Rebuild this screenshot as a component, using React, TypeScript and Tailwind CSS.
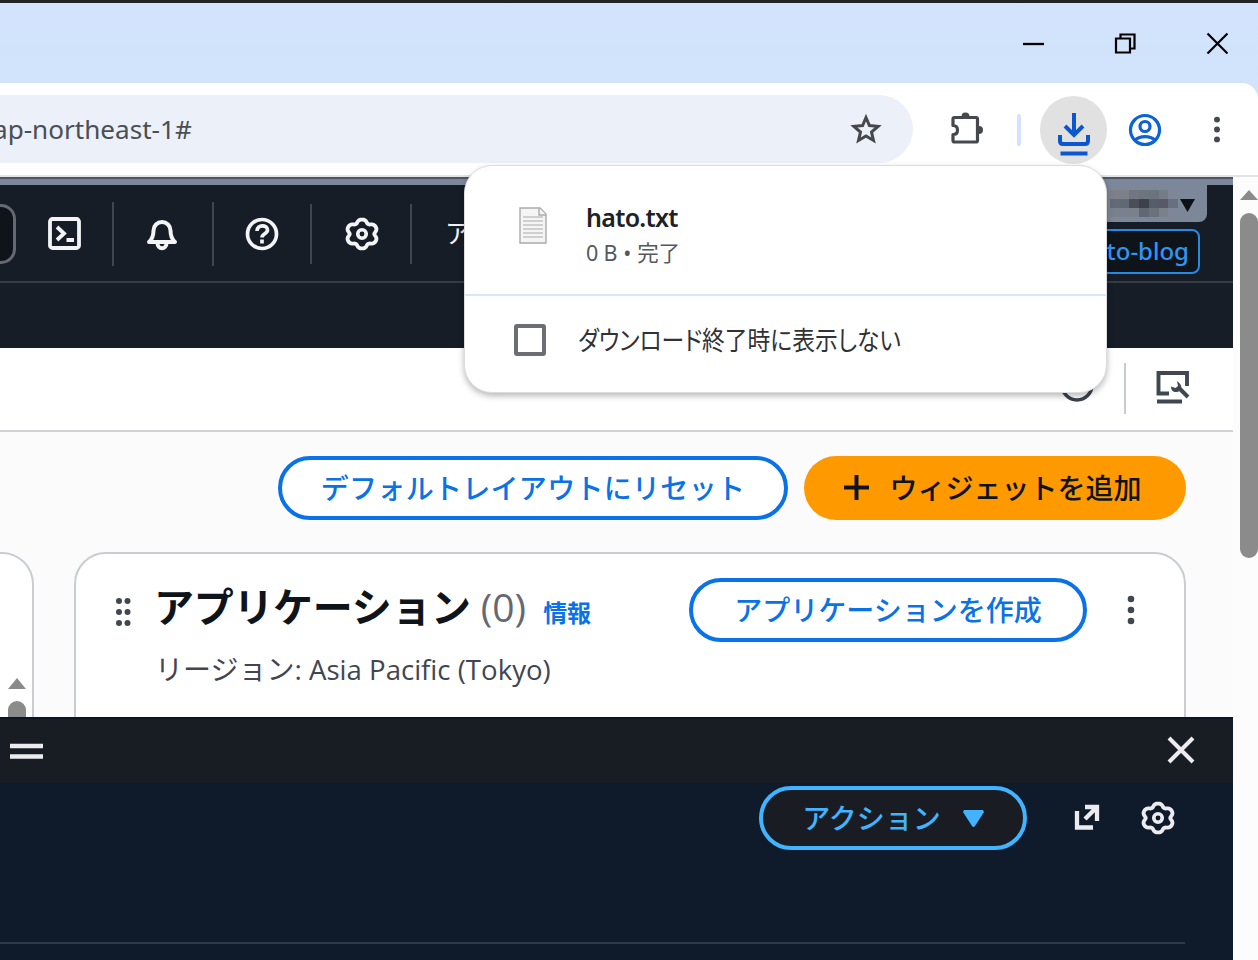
import React from "react";

const jp = "font-['Open_Sans','Noto_Sans_CJK_JP',sans-serif]";

// Six-lobed cog outline in a 32-unit box, slightly widened so it fills the square
const gearPath =
  Array.from({ length: 72 }, (_, i) => {
    const a = (i * Math.PI) / 36;
    const r = 12.4 + 1.5 * Math.cos(6 * a) - 0.3 * Math.cos(12 * a);
    return `${i ? "L" : "M"}${(16 + 1.09 * r * Math.sin(a)).toFixed(2)} ${(16 - r * Math.cos(a)).toFixed(2)}`;
  }).join("") + "Z";

function Gear({ className }: { className: string }) {
  return (
    <svg viewBox="0 0 32 32" className={className} fill="none" stroke="currentColor" strokeWidth="3.6" strokeLinejoin="round">
      <path d={gearPath} />
      <circle cx="16" cy="16" r="4" strokeWidth="3.4" />
    </svg>
  );
}

function Dots({ className }: { className: string }) {
  return (
    <svg viewBox="0 0 8 30" className={className} fill="currentColor">
      <circle cx="4" cy="4" r="3.3" />
      <circle cx="4" cy="15" r="3.3" />
      <circle cx="4" cy="26" r="3.3" />
    </svg>
  );
}

function TitleBar() {
  return (
    <div className="flex h-[83px] shrink-0 items-center justify-end border-t-[3px] border-[#202327] bg-linear-to-b from-[#d3e2fd] to-[#d0e4fa] pr-[30px] text-black">
      <svg className="mr-[70px] h-[22px] w-[21px]" viewBox="0 0 21 22" stroke="currentColor" strokeWidth="2.3"><path d="M0 12h21" /></svg>
      <svg className="mr-[70px] h-[22px] w-[22px]" viewBox="0 0 22 22" fill="none" stroke="currentColor" strokeWidth="2.2">
        <path d="M2 6.500h14v14H2zM6.500 6.500V2.500h14v14h-4" />
      </svg>
      <svg className="h-[22px] w-[22px]" viewBox="0 0 22 22" stroke="currentColor" strokeWidth="2.2"><path d="M1.500 1.500l20 20M21.500 1.500l-20 20" /></svg>
    </div>
  );
}

function Toolbar() {
  return (
    <div className="h-[94px] shrink-0 bg-[#d2e3fc]">
      <div className="flex h-full items-start rounded-tr-[16px] border-b-2 border-[#e3e3e3] bg-white pt-3">
        <div className="flex h-[68px] w-[913px] items-center justify-between rounded-r-[34px] bg-[#ebf0f9] pr-[31px]">
          <span className="mt-[1px] ml-[-7px] w-[220px] whitespace-nowrap font-['Noto_Sans'] text-[26.1px] text-[#4b4e53]">ap-northeast-1#</span>
          <svg className="h-8 w-8" viewBox="0 0 32 32" fill="none" stroke="#45484c" strokeWidth="3">
            <path d="M16 4.500l3.400 8 8.700.8-6.600 5.700 2 8.500L16 23l-7.500 4.500 2-8.500-6.600-5.700 8.700-.8z" />
          </svg>
        </div>
        <svg className="mt-[17px] ml-[36px] h-[36px] w-[36px]" viewBox="0 0 36 36" fill="none" stroke="#45484c" strokeWidth="3.200" strokeLinejoin="round">
          <path d="M5.500 5.500H27q1.500 0 1.500 1.500v21.500q0 1.500-1.500 1.500H5.500q-1.500 0-1.500-1.500V22.500c3 0 4.500-2 4.500-4.600S7 13.500 4 13.500V7q0-1.500 1.500-1.500z" />
          <path d="M12.500 4.500a4 4 0 0 1 8 0zM30 14a4 4 0 0 1 0 8z" fill="#45484c" stroke="none" />
        </svg>
        <div className="mt-[19px] ml-[32px] h-8 w-1 rounded bg-[#d3e3fd]" />
        <div className="mt-[1px] ml-[19px] flex h-[68px] w-[67px] items-center justify-center rounded-full bg-[#e1e1e1]">
          <svg className="mt-[8px] h-[43px] w-[34px]" viewBox="0 0 34 43" fill="none" stroke="#0b57d0" strokeWidth="4">
            <path d="M17 0v21M8 13l9 9 9-9M3 22v6q0 3 3 3h22q3 0 3-3v-6M3.500 40.500h27" />
          </svg>
        </div>
        <svg className="mt-[17px] ml-[20px] h-[36px] w-[36px]" viewBox="0 0 36 36" fill="none" stroke="#0b63d6" strokeWidth="3.200">
          <circle cx="18" cy="18" r="14.500" /><circle cx="18" cy="14.500" r="5" /><path d="M8 28c5-4.500 15-4.500 20 0" />
        </svg>
        <Dots className="mt-[21px] ml-[50px] h-[27px] w-[8px] text-[#45484c]" />
      </div>
    </div>
  );
}

function ConsoleNav() {
  return (
    <div className="h-[171px] shrink-0 border-t-2 border-[#4b5565] bg-[#161d27]">
      <div className="h-[6px] bg-[#7c8899]" />
      <div className="relative flex h-[98px] border-b-2 border-[#363c46] text-[#f3f4f5]">
        <div className="mt-[19px] h-[60px] w-[16px] rounded-r-[15px] border-[3px] border-l-0 border-[#656a72] bg-[#0f141a]" />
        <div className="flex h-[97px] w-[96px] items-center justify-center">
          <svg className="h-[33px] w-[33px]" viewBox="0 0 33 33" fill="none" stroke="currentColor" strokeWidth="3.800">
            <rect x="2" y="2" width="29" height="29" rx="2.500" /><path d="M9 10l7 6.500L9 23M18.500 23H26" />
          </svg>
        </div>
        <div className="mt-[17px] h-[64px] w-[2px] bg-[#40454e]" />
        <div className="flex h-[97px] w-[98px] items-center justify-center pr-[3px]">
          <svg className="h-[34px] w-[34px]" viewBox="0 0 34 34" fill="none" stroke="currentColor" strokeWidth="4" strokeLinejoin="round">
            <path d="M4 25c4-3.500 4.500-6.500 4.500-11.500a8.500 8.500 0 0 1 17 0c0 5 .5 8 4.500 11.500z" /><path d="M12.500 26c0 7 9 7 9 0" />
          </svg>
        </div>
        <div className="mt-[17px] h-[64px] w-[2px] bg-[#40454e]" />
        <div className="flex h-[97px] w-[96px] items-center justify-center">
          <svg className="h-[34px] w-[34px]" viewBox="0 0 34 34" fill="none" stroke="currentColor" strokeWidth="3.700">
            <circle cx="17" cy="17" r="14.500" /><path d="M12 14c0-7 10.500-6.500 10.500-1 0 4-5.500 3.500-5.500 7.500M17 22.500v4" />
          </svg>
        </div>
        <div className="mt-[19px] h-[60px] w-[2px] bg-[#40454e]" />
        <div className="flex h-[97px] w-[98px] items-center justify-center pl-[1px]"><Gear className="h-[34px] w-[34px]" /></div>
        <div className="mt-[19px] h-[60px] w-[2px] bg-[#40454e]" />
        <span className={`${jp} mt-[31px] ml-[33px] h-[34px] text-[26px] leading-[34px]`}>ア</span>
        <div className="absolute top-[-1px] right-[26px] flex h-[38px] w-[160px] items-center justify-end rounded-br-[8px] bg-[#7c8899] pr-[12px]">
          <div className="mr-[2px] grid h-[27px] w-[68px] grid-cols-7 grid-rows-3">
            {["bg-[#7d8088]","bg-[#7d8087]","bg-[#707782]","bg-[#6d747e]","bg-[#6c737d]","bg-[#747c88]","bg-[#7d8798]","bg-[#626b77]","bg-[#5f6875]","bg-[#4b4e58]","bg-[#3d414b]","bg-[#555d6a]","bg-[#575967]","bg-[#667080]","bg-[#78818c]","bg-[#7a818c]","bg-[#7b818b]","bg-[#626873]","bg-[#6c727c]","bg-[#7a818c]","bg-[#7d8798]"].map((c, i) => <i key={i} className={c} />)}
          </div>
          <svg className="mt-[4px] h-[13px] w-[15px]" viewBox="0 0 15 13" fill="#0d1117"><path d="M0 0h15L7.500 13z" /></svg>
        </div>
        <div className="absolute top-[44px] right-[33px] flex h-[45px] w-[180px] items-center justify-end rounded-[8px] border-[2.500px] border-[#268be5] bg-[#0f141a] pr-[9px] pb-[2px] font-['Noto_Sans'] text-[24px] font-medium text-[#3096f5]">hato-blog</div>
      </div>
    </div>
  );
}

function ConsoleBody() {
  return (
    <>
      <div className="flex h-[84px] shrink-0 items-start justify-end border-b-2 border-[#cfd2d6] bg-white pr-[42px]">
        <svg className="mt-[20px] mr-[30px] h-[34px] w-[34px]" viewBox="0 0 34 34" fill="none" stroke="#3b424c" strokeWidth="3.500"><circle cx="17" cy="17" r="15" /></svg>
        <div className="mt-[15px] mr-[29px] h-[51px] w-[2px] bg-[#c8ccd1]" />
        <svg className="mt-[22px] h-[34px] w-[36px]" viewBox="0 0 36 34" fill="none" stroke="#414750" strokeWidth="3.900">
          <path d="M14 23.500H3.500V3H32v13M2 31.500h25" />
          <path d="M33 27l-9-9" strokeWidth="4" />
          <path d="M22 11l1 5-2.500 2-4.500-1.500c0 5 4 6.500 7.500 5 4-1 4-7-1.500-10.500z" fill="#414750" stroke="none" />
        </svg>
      </div>
      <div className={`${jp} flex shrink-0 justify-end gap-4 bg-[#fbfbfc] pt-[24px] pr-[47px] pb-8 text-[28px] font-medium`}>
        <button className="h-16 w-[510px] rounded-full border-4 border-[#0972e6] bg-white leading-[54px] tracking-[0.3px] text-[#0972e6]">デフォルトレイアウトにリセット</button>
        <button className="flex h-16 w-[382px] items-start justify-center gap-[20px] rounded-full bg-[#ff9900] pr-[4px] text-[#0f141a]">
          <svg className="mt-[19px] h-[25px] w-[25px]" viewBox="0 0 25 25" stroke="currentColor" strokeWidth="4"><path d="M12.500 0v25M0 12.500h25" /></svg>
          <span className="leading-[64px]">ウィジェットを追加</span>
        </button>
      </div>
      <div className="flex h-[165px] shrink-0 gap-[40px] overflow-hidden bg-[#fbfbfc]">
        <div className="flex h-[220px] w-[34px] flex-col items-end rounded-tr-[32px] border-2 border-l-0 border-[#c9ccd1] bg-white pr-[6px]">
          <svg className="mt-[124px] h-[11px] w-[18px]" viewBox="0 0 18 11" fill="#8b8b8b"><path d="M0 11h18L9 0z" /></svg>
          <div className="mt-[12px] h-[60px] w-[18px] rounded-full bg-[#8b8b8b]" />
        </div>
        <div className={`${jp} h-[220px] w-[1112px] rounded-[32px] border-2 border-[#c9ccd1] bg-white px-[38px]`}>
          <div className="flex items-start">
            <svg className="mt-[43px] ml-[1px] h-[30px] w-[17px]" viewBox="0 0 17 30" fill="#414750">
              {[4, 15, 26].map((y) => <g key={y}><circle cx="4" cy={y} r="3" /><circle cx="12.500" cy={y} r="3" /></g>)}
            </svg>
            <h2 className="mt-[23px] ml-[22px] h-[60px] whitespace-nowrap text-[40px] leading-[60px] font-bold tracking-[-0.3px] text-[#0f141a]">アプリケーション</h2>
            <span className="mt-[23px] ml-[10px] text-[39px] leading-[60px] text-[#656871]">(0)</span>
            <a className="mt-[41px] ml-[17px] w-[50px] text-[24px] leading-[36px] font-bold text-[#0972e6]">情報</a>
            <button className="mt-[24px] ml-auto h-16 w-[398px] rounded-full border-4 border-[#0972e6] text-[28px] leading-[54px] font-medium text-[#0972e6]">アプリケーションを作成</button>
            <Dots className="mt-[41px] mr-[11px] ml-[40px] h-[30px] w-[8px] text-[#414750]" />
          </div>
          <p className="mt-[6px] ml-[41px] text-[28px] leading-[42px] whitespace-nowrap text-[#424650]">リージョン: <span className="inline-block origin-left scale-x-[0.985]">Asia Pacific (Tokyo)</span></p>
        </div>
      </div>
    </>
  );
}

function ShellPanel() {
  return (
    <div className="flex flex-1 flex-col border-t-2 border-[#0b1420] bg-[#0f1b2a] text-[#ebebf0]">
      <div className="flex h-[64px] shrink-0 items-center justify-between bg-[#181d24] pr-[38px] pb-[2px] pl-[10px]">
        <svg className="mt-1 h-[18px] w-[33px]" viewBox="0 0 33 18" stroke="currentColor" strokeWidth="4.500"><path d="M0 3h33M0 13.500h33" /></svg>
        <svg className="h-[28px] w-[28px]" viewBox="0 0 28 28" stroke="currentColor" strokeWidth="4"><path d="M2 2l24 24M26 2L2 26" /></svg>
      </div>
      <div className="mr-[48px] flex h-[161px] items-start justify-end border-b-2 border-[#2f3a48] pt-[3px] pr-[10px]">
        <button className={`${jp} flex h-16 w-[268px] items-start justify-center gap-[22px] rounded-full border-4 border-[#42b4ff] bg-[#191d23] text-[28px] leading-[56px] font-medium text-[#42b4ff]`}>
          <span>アクション</span>
          <svg className="mt-[20px] h-[17px] w-[21px]" viewBox="0 0 21 17" fill="currentColor"><path d="M1 0h19l1 2-9 14q-1.500 2-3 0L0 2z" /></svg>
        </button>
        <svg className="mt-[18px] ml-[46px] h-[28px] w-[28px]" viewBox="0 0 28 28" fill="none" stroke="currentColor" strokeWidth="4.300"><path d="M4 7v16.500h16M12 3h12v14M23 4L12 15" /></svg>
        <Gear className="mt-[15px] ml-[40px] h-[34px] w-[34px]" />
      </div>
    </div>
  );
}

function DownloadPopup() {
  return (
    <div className="absolute top-[165px] left-[464px] h-[228px] w-[643px] rounded-[28px] border-1 border-[#dddddd] bg-white font-['Noto_Sans','Noto_Sans_CJK_JP',sans-serif] shadow-[0_3px_6px_rgba(0,0,0,0.28)]">
      <div className="flex h-[130px] border-b-2 border-[#d7e5fd] pl-[53px]">
        <svg className="mt-[41px] h-[38px] w-[30px]" viewBox="0 0 30 38" fill="#f5f5f5" stroke="#aaa" strokeWidth="1.400">
          <path d="M2 1h20l6 6v29H2z" /><path d="M21 1v7h7" /><path d="M5 10h20M5 14h20M5 18h20M5 22h20M5 26h20M5 30h20" stroke="#c2c2c2" />
        </svg>
        <div className="mt-[33px] ml-[38px]">
          <div className="text-[25px] leading-[36px] font-semibold tracking-[-0.7px] text-[#202124]">hato.txt</div>
          <div className="text-[21.500px] leading-[36px] tracking-[-0.2px] text-[#55585c]"><span className="mr-[6px]">0 B</span><span className="mr-[6px]">•</span>完了</div>
        </div>
      </div>
      <div className="flex h-[88px] items-center pl-[49px]">
        <div className="h-8 w-8 rounded-[3px] border-4 border-[#6b6e72]" />
        <span className="ml-[32px] origin-left scale-x-[0.875] whitespace-nowrap text-[26px] leading-[40px] text-[#303236] [font-feature-settings:'palt']">ダウンロード終了時に表示しない</span>
      </div>
    </div>
  );
}

export default function App() {
  return (
    <div className="relative flex h-[960px] w-[1258px] flex-col overflow-hidden bg-white">
      <TitleBar />
      <Toolbar />
      <div className="flex min-h-0 flex-1">
        <div className="flex w-[1233px] flex-col"><ConsoleNav /><ConsoleBody /><ShellPanel /></div>
        <div className="flex w-[25px] flex-col items-center bg-[#fcfcfc] pl-[6px]">
          <svg className="mt-[13px] h-[10px] w-[18px]" viewBox="0 0 18 10" fill="#8b8b8b"><path d="M0 10h18L9 0z" /></svg>
          <div className="mt-[13px] h-[345px] w-[18px] rounded-full bg-[#8b8b8b]" />
        </div>
      </div>
      <DownloadPopup />
    </div>
  );
}
